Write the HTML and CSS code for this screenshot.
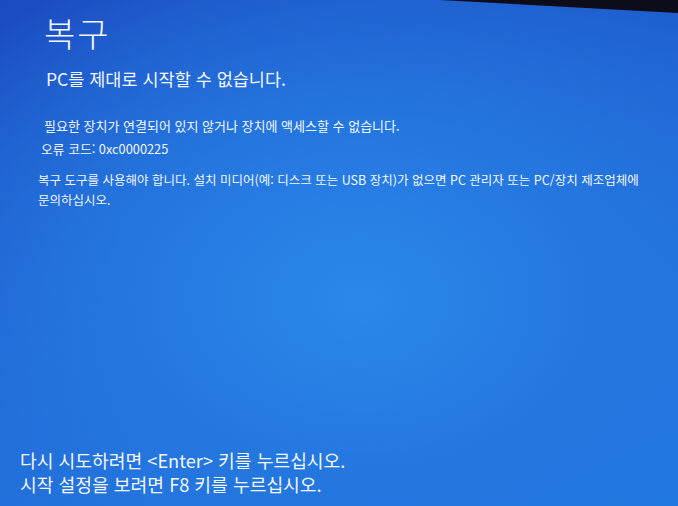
FILE: index.html
```html
<!DOCTYPE html>
<html lang="ko">
<head>
<meta charset="utf-8">
<title>복구</title>
<link rel="stylesheet" href="styles.css">
</head>
<body>
<div class="screen">
  <div class="bezel"></div>
  <div class="top">
    <h1 class="title">복구</h1>
    <p class="headline">PC를 제대로 시작할 수 없습니다.</p>
    <p class="msg first">필요한 장치가 연결되어 있지 않거나 장치에 액세스할 수 없습니다.</p>
    <p class="msg code">오류 코드: 0xc0000225</p>
    <p class="msg advice">복구 도구를 사용해야 합니다. 설치 미디어(예: 디스크 또는 USB 장치)가 없으면 PC 관리자 또는 PC/장치 제조업체에<br>문의하십시오.</p>
  </div>
  <div class="bottom">
    <p class="key">다시 시도하려면 &lt;Enter&gt; 키를 누르십시오.</p>
    <p class="key">시작 설정을 보려면 F8 키를 누르십시오.</p>
  </div>
</div>
</body>
</html>
```
FILE: styles.css
```css
html, body {
  margin: 0;
  padding: 0;
}
body {
  width: 678px;
  height: 506px;
  overflow: hidden;
  font-family: "Noto Sans CJK KR", "Noto Sans", sans-serif;
  color: #f2f7ff;
}
.screen {
  position: relative;
  width: 678px;
  height: 506px;
  box-sizing: border-box;
  display: flex;
  flex-direction: column;
  background:
    radial-gradient(ellipse 520px 380px at 360px 300px, #2b88e8 0%, #2577e0 45%, rgba(32,100,216,0) 100%),
    linear-gradient(160deg, #1b4bc0 0%, #1f60d0 40%, #2272dc 75%, #1f78e0 100%);
}
.bezel {
  position: absolute;
  top: 0;
  left: 0;
  width: 678px;
  height: 16px;
  background: #0d0c1a;
  clip-path: polygon(440px 0, 678px 0, 678px 13px);
}
.top {
  padding: 13px 0 0 44px;
}
.title {
  margin: 0;
  font-size: 34px;
  font-weight: 300;
  line-height: 40px;
  letter-spacing: 2px;
}
.headline {
  margin: 15px 0 0 2px;
  font-size: 17.5px;
  line-height: 22px;
  font-weight: 400;
}
.msg {
  margin: 0;
  font-size: 12.8px;
  line-height: 20px;
}
.first {
  margin-top: 26px;
  font-size: 13px;
}
.code {
  margin-top: 3px;
  margin-left: -3px;
}
.advice {
  margin-top: 11px;
  margin-left: -6px;
  font-size: 12.5px;
}
.bottom {
  margin-top: auto;
  padding: 0 0 10px 20px;
}
.key {
  margin: 0;
  font-size: 18.2px;
  line-height: 24px;
}
```
